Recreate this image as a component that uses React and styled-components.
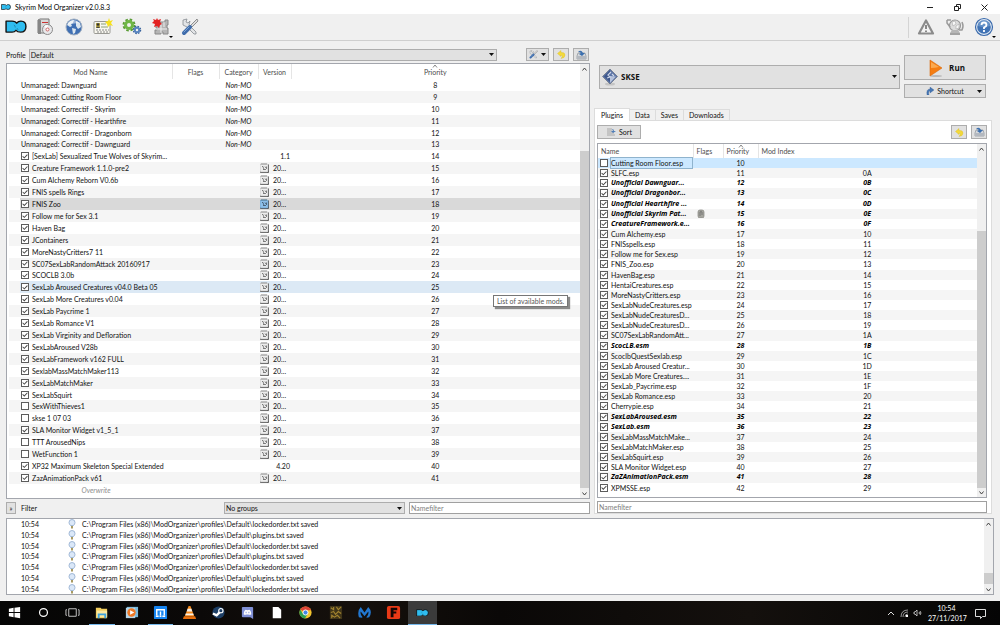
import { useState } from 'react'
import styled, { createGlobalStyle, css } from 'styled-components'

const GlobalStyle = createGlobalStyle`
    * {
        box-sizing: border-box;
    }

    body {
        margin: 0;
        background: #f0f0f0;
        color: #111;
        font-family: Lato, "Open Sans", sans-serif;
        font-size: 7px;
        line-height: 10px;
    }

    button, input, select {
        font: inherit;
        color: inherit;
        margin: 0;
        padding: 0;
        border-radius: 0;
    }

    svg {
        display: block;
        flex: none;
    }
`

const Window = styled.div`
    display: flex;
    flex-direction: column;
    height: 100vh;
`

const TitleBar = styled.header`
    display: flex;
    align-items: center;
    gap: 4px;
    height: 14px;
    padding: 0 4px 0 1px;
    background: #fff;
`

const Title = styled.h1`
    flex: 1;
    margin: 0;
    font-size: 7px;
    font-weight: normal;
    color: #000;
`

const WindowButton = styled.button`
    display: grid;
    place-items: center;
    width: 23px;
    height: 14px;
    border: 0;
    background: none;
`

const Toolbar = styled.nav`
    display: flex;
    align-items: center;
    height: 27px;
    padding: 0 2px 0 1px;
    border-bottom: 1px solid #cfcfcf;
`

const ToolButton = styled.button`
    position: relative;
    display: grid;
    place-items: center;
    width: 29px;
    height: 24px;
    border: 0;
    background: none;
`

const MenuMark = styled.span`
    position: absolute;
    right: 2px;
    bottom: 1px;
    border: 2px solid transparent;
    border-top-color: #000;
    border-bottom: 0;
`

const ToolbarEnd = styled.div`
    display: flex;
    align-items: center;
    height: 21px;
    margin-left: auto;
    padding-left: 2px;
    border-left: 1px solid #d4d4d4;
`

const Main = styled.main`
    flex: 1;
    display: grid;
    grid-template-columns: 584fr 401fr;
    gap: 3px;
    min-height: 0;
    padding: 0 6px;
`

const Column = styled.section`
    display: flex;
    flex-direction: column;
    min-width: 0;
    min-height: 0;
`

const ProfileRow = styled.div`
    display: flex;
    align-items: center;
    gap: 3px;
    height: 22px;
    padding: 7px 1px 2px 0;
`

const FieldLabel = styled.label`
    flex: none;
`

const SelectBox = styled.div`
    flex: 1;
    display: grid;
    align-items: center;

    > * {
        grid-area: 1 / 1;
    }

    > svg {
        justify-self: end;
        margin-right: 3px;
        pointer-events: none;
    }
`

const Select = styled.select`
    appearance: none;
    width: 100%;
    height: 12px;
    padding-left: 1px;
    border: 1px solid #adadad;
    background: #e1e1e1;

    ${({ $tall }) => $tall && css`
        height: 24px;
        padding-left: 21px;
        font-family: "Open Sans", sans-serif;
        font-size: 8px;
        font-weight: bold;
    `}
`

const SelectIcon = styled.span`
    justify-self: start;
    padding-left: 3px;
    pointer-events: none;
`

const Button = styled.button`
    display: flex;
    align-items: center;
    justify-content: center;
    gap: 3px;
    width: ${({ $width }) => $width || 'auto'};
    height: ${({ $height }) => $height || '13px'};
    border: 1px solid #adadad;
    background: #e1e1e1;
`

const ProfileTools = styled.div`
    display: flex;
    gap: 4px;
    margin-left: 26px;
`

const Panel = styled.div`
    flex: 1;
    display: flex;
    min-height: 0;
    border: 1px solid #a3a6ad;
    background: #fff;
`

const TableArea = styled.div`
    flex: 1;
    min-width: 0;
    padding: ${({ $padding }) => $padding};
`

const Table = styled.table`
    width: 100%;
    height: 100%;
    table-layout: fixed;
    border-collapse: collapse;
`

const Th = styled.th`
    position: relative;
    height: ${({ $height }) => $height};
    padding: 0 0 0 ${({ $left }) => ($left ? '3px' : '0')};
    border-right: 1px solid ${({ $last }) => ($last ? '#fff' : '#e5e5e5')};
    font-weight: normal;
    text-align: ${({ $left }) => ($left ? 'left' : 'center')};
    color: #4d4d4d;

    svg {
        position: absolute;
        top: 0;
        left: calc(50% - 3px);
    }
`

const rowColors = {
    selected: '#d9d9d9',
    hover: '#dce9f5',
    focus: '#cce8ff',
}

const Row = styled.tr`
    &:nth-child(even) {
        background: #f5f5f5;
    }

    td {
        padding: 0;
        line-height: 10px;
        white-space: nowrap;
    }

    ${({ $state }) => $state && css`
        td:not([data-indent]) {
            background: ${rowColors[$state]};
        }
    `}

    ${({ $master }) => $master && css`
        font-family: "Open Sans", sans-serif;
        font-weight: bold;
        font-style: italic;
        color: #000;
    `}
`

const Cell = styled.td`
    text-align: ${({ $align }) => $align || 'left'};
    font-style: ${({ $italic }) => ($italic ? 'italic' : 'inherit')};
    color: ${({ $muted }) => ($muted ? '#8c8c8c' : 'inherit')};
`

const NameLine = styled.label`
    display: flex;
    align-items: center;
    gap: 3px;
    height: 10px;
    padding-left: ${({ $pad }) => $pad || '1px'};
`

const NameText = styled.span`
    margin-right: 1px;
    outline: ${({ $focus }) => ($focus ? '1px solid #8fb3cd' : 'none')};
    flex: ${({ $focus }) => ($focus ? 1 : 'none')};
`

const Check = styled.input`
    appearance: none;
    display: grid;
    place-items: center;
    flex: none;
    width: 8px;
    height: 8px;
    border: 1px solid #5c5c5c;
    background: #fff;

    &:checked::after {
        content: "";
        width: 6px;
        height: 6px;
        background: #444;
        clip-path: polygon(4% 50%, 16% 42%, 38% 64%, 84% 16%, 96% 26%, 38% 86%);
    }
`

const VersionLine = styled.div`
    display: flex;
    align-items: center;
    justify-content: ${({ $plain }) => ($plain ? 'flex-end' : 'flex-start')};
    gap: 4px;
    height: 10px;
    padding: 0 1px 0 2px;
`

const ScrollTrack = styled.div`
    flex: none;
    display: flex;
    flex-direction: column;
    width: 9px;
    background: #f0f0f0;
`

const ScrollButton = styled.button`
    flex: none;
    display: grid;
    place-items: center;
    height: 9px;
    border: 0;
    background: none;
`

const ScrollPart = styled.div`
    flex: ${({ $size }) => $size} 0 0;
    background: ${({ $thumb }) => ($thumb ? '#cdcdcd' : 'none')};
`

const FilterRow = styled.div`
    display: flex;
    align-items: center;
    height: 15px;
    padding-top: 3px;
`

const FilterLabel = styled.span`
    flex: 1;
    padding-left: 5px;
`

const FilterFields = styled.div`
    display: grid;
    grid-template-columns: 1fr 1fr;
    gap: 4px;
    width: 366px;
`

const TextBox = styled.input`
    width: 100%;
    height: 12px;
    padding: 0 1px;
    border: 1px solid #a0a0a0;
    background: #fff;

    &::placeholder {
        color: #808080;
        opacity: 1;
    }
`

const Launcher = styled.div`
    display: flex;
    align-items: center;
    gap: 4px;
    padding: 14px 8px 10px 6px;
`

const LaunchButtons = styled.div`
    display: flex;
    flex-direction: column;
    gap: 4px;
    width: 82px;
`

const RunButton = styled(Button)`
    height: 25px;
    gap: 6px;
    padding-left: 4px;
    font-family: "Open Sans", sans-serif;
    font-size: 8px;
    font-weight: bold;
`

const ShortcutButton = styled(Button)`
    display: grid;
    grid-template-columns: 1fr auto auto 1fr;
    height: 14px;
    padding: 0 3px;

    svg:last-child {
        justify-self: end;
    }
`

const TabList = styled.div`
    display: flex;
    align-items: flex-end;
    height: 12px;
    padding-left: 1px;
`

const Tab = styled.button`
    height: ${({ $active }) => ($active ? '13px' : '11px')};
    margin-bottom: ${({ $active }) => ($active ? '-1px' : '0')};
    padding: 0 ${({ $active }) => ($active ? '6px' : '5px')};
    border: 1px solid #dcdcdc;
    border-left-width: ${({ $active }) => ($active ? '1px' : '0')};
    border-bottom: 0;
    background: ${({ $active }) => ($active ? '#fff' : '#f0f0f0')};
    line-height: 10px;
    z-index: 1;
`

const TabPane = styled.div`
    flex: 1;
    display: flex;
    flex-direction: column;
    min-height: 0;
    margin: 0 2px 0 1px;
    padding: 4px 4px 0 2px;
    border: 1px solid #dcdcdc;
    background: #fff;
`

const PaneTools = styled.div`
    display: flex;
    gap: 4px;
    padding-bottom: 4px;
`

const Spacer = styled.span`
    flex: 1;
`

const PaneFilter = styled.div`
    display: flex;
    padding: 3px 0 0;
`

const LogPanel = styled(Panel)`
    flex: none;
    height: 77px;
    margin: 4px 6px 6px;
`

const Tooltip = styled.div`
    position: absolute;
    left: 493px;
    top: 295px;
    padding: 0 3px;
    border: 1px solid #767676;
    background: #fff;
    box-shadow: 2px 2px 1px #8a8a8a;
    color: #575757;
    font-size: 7px;
    line-height: 10px;
`

const Taskbar = styled.footer`
    display: flex;
    align-items: stretch;
    height: 24px;
    background: linear-gradient(90deg, #050505, #0b0908 20%, #15100c 35%, #0a0807 50%, #14100d 75%, #050505);
    color: #fff;
`

const TaskItems = styled.div`
    display: grid;
    grid-template-columns: repeat(15, 1fr);
    width: 437px;
    margin-right: auto;
`

const TaskButton = styled.button`
    display: grid;
    place-items: center;
    margin: 0 ${({ $active }) => ($active ? '0' : '2px')};
    border: 0;
    border-bottom: 1px solid ${({ $open }) => ($open ? '#76b9ed' : 'transparent')};
    background: ${({ $active }) => ($active ? '#3b3b3b' : 'none')};
`

const Tray = styled.div`
    display: flex;
    align-items: center;
    gap: 5px;
    padding-right: 14px;
`

const Clock = styled.time`
    width: 37px;
    text-align: center;
    line-height: 10px;
`

const LogoIcon = ({ size = 22 }) => (
    <svg width={size} height={size * 0.6} viewBox="0 0 62 37">
        <path
            d="M3 3H20Q30 3 33 9Q37 3 45 3Q59 3 59 18Q59 34 44 34Q35 34 31 29Q27 34 20 34H3Z"
            fill="#2fbdf0" stroke="#111" strokeWidth="4" strokeLinejoin="round"
        />
        <path d="M25 14Q29 15 29 21M37 28L34 23" fill="none" stroke="#18759a" strokeWidth="2" />
    </svg>
)

const InstallIcon = () => (
    <svg width="18" height="18" viewBox="0 0 18 18">
        <path d="M2 2L4 1H13V15H2Z" fill="#d8d8d8" stroke="#777" />
        <path d="M2 2H5V16H2Z" fill="#858585" />
        <path d="M6 4H12V5H6Z" fill="#c33" />
        <circle cx="11.500" cy="11.500" r="5" fill="#e8e8ea" stroke="#8a8a8a" />
        <path d="M11 11L8 8A5 5 0 0 1 12 7Z" fill="#fff" />
        <circle cx="11.500" cy="11.500" r="1.500" fill="#fff" stroke="#c66" />
    </svg>
)

const GlobeIcon = () => (
    <svg width="18" height="18" viewBox="0 0 18 18">
        <circle cx="9" cy="9" r="8" fill="#3f6fb3" stroke="#a3b1c2" />
        <path d="M3 5Q5 2 9 2L8 5L6 6L7 8L5 9L2 7ZM7 10L11 11L10 15L8 16ZM11 3L15 5L16 9L13 11L11 8Z" fill="#dce6ee" />
        <path d="M3 5Q9 -1 15 5Q9 5 3 7Z" fill="#fff" opacity=".5" />
    </svg>
)

const CardIcon = () => (
    <svg width="20" height="18" viewBox="0 0 20 18">
        <rect x="1" y="3.500" width="16" height="12" rx="1" fill="#f7f6ee" stroke="#9a9a94" />
        <rect x="3" y="5" width="4" height="5" fill="#b5a445" />
        <circle cx="5" cy="6.500" r="1.300" fill="#333" />
        <path d="M3 10Q5 7 7 10Z" fill="#444" />
        <path d="M8 6H13M8 9H15" stroke="#8ba07a" />
        <path d="M3 12H16M4 14H15" stroke="#888" strokeDasharray="2 1" />
        <path d="M16 0L17 3L20 2L18 5L20 8L17 7L15 9L14 6L12 4L15 3Z" fill="#f7e11c" />
    </svg>
)

const GearsIcon = () => (
    <svg width="20" height="18" viewBox="0 0 20 18">
        <circle cx="7" cy="7" r="5.500" fill="none" stroke="#5a9c35" strokeWidth="2" strokeDasharray="2.500 1.820" />
        <circle cx="7" cy="7" r="3.500" fill="none" stroke="#6fb646" strokeWidth="3" />
        <circle cx="15" cy="12" r="3.500" fill="none" stroke="#35609a" strokeWidth="1.500" strokeDasharray="1.600 1.150" />
        <circle cx="15" cy="12" r="2.200" fill="none" stroke="#5683bf" strokeWidth="2" />
    </svg>
)

const PuzzleIcon = () => (
    <svg width="18" height="18" viewBox="0 0 18 18">
        <path d="M4 7H8V4H13V2H16V7H15V10H16V16H11V14H9V16H3V12H5V10H4Z" fill="#b5b5b5" stroke="#888" />
        <path d="M9 5V15M4 11H15M12 4V9" stroke="#eee" />
        <path d="M5 0L6 2L9 1L8 4L10 6L8 7L7 10L5 8L2 9L3 6L0 5L2 3L1 1L4 2Z" fill="#e32222" />
    </svg>
)

const ToolsIcon = ({ size = 18 }) => (
    <svg width={size} height={size} viewBox="0 0 18 18">
        <path d="M2 2L6 1L5 4L7 5L9 3L8 7L15 14Q16 17 13 16L6 9L2 7Z" fill="#e2e4e6" stroke="#858a90" strokeWidth=".8" />
        <path d="M16 1L17 3L11 9L9 8Z" fill="#ddd" stroke="#777" strokeWidth=".8" />
        <path d="M9 9L3 15" stroke="#3f6cab" strokeWidth="4" strokeLinecap="round" />
        <path d="M8 9L3 14" stroke="#7ba4d6" strokeWidth="1" strokeLinecap="round" />
    </svg>
)

const WarningIcon = () => (
    <svg width="18" height="18" viewBox="0 0 18 18">
        <path d="M9 2.500L16 15.500H2Z" fill="#f3f3f3" stroke="#8b8b8b" strokeWidth="2.200" strokeLinejoin="round" />
        <path d="M9 7V11M9 12.500V14" stroke="#666" strokeWidth="1.500" />
    </svg>
)

const EndorseIcon = () => (
    <svg width="20" height="18" viewBox="0 0 20 18">
        <circle cx="10" cy="7.500" r="5.500" fill="#dcdcdc" stroke="#999" strokeWidth="1.200" />
        <path d="M7 4L10 3L11 6L8 8ZM11 8L14 6V10L11 11Z" fill="#f8f8f8" stroke="#aaa" strokeWidth=".6" />
        <path d="M2 2H6M2 2V5L5 9M17 4Q19 8 17 12H14" fill="none" stroke="#9a9a9a" strokeWidth="1.500" />
        <path d="M5 15H15L13 12H7Z" fill="#b5b5b5" />
        <path d="M5 16H15" stroke="#888" strokeWidth="1.500" />
    </svg>
)

const HelpIcon = () => (
    <svg width="20" height="20" viewBox="0 0 20 20">
        <circle cx="10" cy="10" r="8.500" fill="#dfe8f2" stroke="#3a6aac" strokeWidth="1.200" />
        <circle cx="10" cy="10" r="6.800" fill="#4073b5" />
        <path d="M4 9A6 6 0 0 1 16 9Q10 11 4 9Z" fill="#7ea6d6" opacity=".6" />
        <path d="M7.500 8Q7.500 5.500 10 5.500T12.500 8Q12.500 9.500 10 10.500V12M10 13V15" fill="none" stroke="#fff" strokeWidth="1.800" />
    </svg>
)

const UndoIcon = () => (
    <svg width="9" height="9" viewBox="0 0 9 9">
        <path d="M.5 3.500L4 .5V2.500Q8 2 8 5Q8 8 4 8.500Q6.500 6 4 5V6.500Z" fill="#f3d93a" stroke="#d8bd25" strokeWidth=".4" />
    </svg>
)

const BackupIcon = () => (
    <svg width="11" height="10" viewBox="0 0 11 10">
        <path d="M1 6L2 3H9L10 6V9H1Z" fill="#d5d8dc" stroke="#8b9097" strokeWidth=".7" />
        <path d="M1 6H10V9H1Z" fill="#b3b8bf" />
        <path d="M2 2Q5 -1 7 3H9L6 6L3 4L5 3Q4 2 2 2Z" fill="#3b6fae" />
    </svg>
)

const SortIcon = () => (
    <svg width="10" height="8" viewBox="0 0 10 8">
        <path d="M1 1H6M1 3H6M1 5H8M1 7H9" stroke="#a8a8a8" />
        <path d="M6 1Q8 1 8 3H10L7 5L5 3H7Z" fill="#4e7db8" />
    </svg>
)

const SkseIcon = () => (
    <svg width="16" height="18" viewBox="0 0 16 18">
        <ellipse cx="8" cy="16" rx="5" ry="1.500" fill="#c4c4c4" />
        <path d="M8 1L15.500 8.500L8 16L.5 8.500Z" fill="#5b74a6" stroke="#6d7688" strokeWidth=".8" />
        <path d="M8 8L14 8.500L8 15Z" fill="#b5c2dc" />
        <path d="M8 2L2 8.500L8 14Z" fill="#3f588c" />
        <path d="M9 4L6 7L8 9L5 10M10 6L12 8" fill="none" stroke="#cdd6e8" strokeWidth="1.200" />
    </svg>
)

const PlayIcon = () => (
    <svg width="14" height="18" viewBox="0 0 14 18">
        <ellipse cx="7" cy="17" rx="6" ry="1" fill="#b9b9b9" />
        <path d="M1 1L13 9L1 17Z" fill="#f57d11" stroke="#d9680a" strokeWidth=".6" />
        <path d="M2 3L10 8Q6 9 2 9Z" fill="#fba94f" />
    </svg>
)

const ShortcutIcon = () => (
    <svg width="8" height="8" viewBox="0 0 8 8">
        <path d="M1 8Q0 2 4 2V0L8 3L4 6V4Q2 4 3 8Z" fill="#4676b4" stroke="#2e5688" strokeWidth=".3" />
    </svg>
)

const ArrowDown = () => (
    <svg width="5" height="3" viewBox="0 0 5 3">
        <path d="M0 0H5L2.500 3Z" fill="#111" />
    </svg>
)

const Chevron = ({ down, color = '#444', width = 5 }) => (
    <svg width={width} height="4" viewBox="0 0 5 4">
        <path d={down ? 'M.5 .5L2.500 3L4.500 .5' : 'M.5 3.500L2.500 1L4.500 3.500'} fill="none" stroke={color} />
    </svg>
)

const NexusIcon = ({ active }) => (
    <svg width="9" height="10" viewBox="0 0 9 10">
        <path d="M.5 1.500V9.500H8.500V1.500" fill="none" stroke="#555" />
        <rect x="0" y="1" width="8" height="8" rx="1" fill={active ? '#8dbfe9' : '#ededed'} stroke={active ? '#6a9cc8' : '#bbb'} strokeWidth=".6" />
        <path d="M2 0V2M4 0V2M6 0V2" stroke={active ? '#356' : '#777'} strokeWidth=".7" />
        <path d="M2 3.500H3L4 6.500M5 3.500L6 5M6.500 3.500V6M3 6.500H6" fill="none" stroke={active ? '#345' : '#555'} strokeWidth=".7" />
    </svg>
)

const ClipIcon = () => (
    <svg width="8" height="9" viewBox="0 0 8 9">
        <rect x="1" y="1" width="6" height="8" rx="2" fill="#a5a59e" stroke="#858580" strokeWidth=".7" />
        <path d="M3 7V3Q4 2 5 3V6" fill="none" stroke="#666" strokeWidth=".7" />
    </svg>
)

const BulbIcon = () => (
    <svg width="8" height="10" viewBox="0 0 8 10">
        <path d="M4 .5Q7 .5 7 3.500Q7 5 5.500 6.500H2.500Q1 5 1 3.500Q1 .5 4 .5Z" fill="#dbe8f8" stroke="#8ea9cd" strokeWidth=".8" />
        <path d="M3 7H5V9.500H3Z" fill="#a89a62" />
    </svg>
)

const mods = [
    ...['Dawnguard', 'Cutting Room Floor', 'Correctif - Skyrim', 'Correctif - Hearthfire', 'Correctif - Dragonborn', 'Correctif - Dawnguard']
        .map((name) => ({ name: `Unmanaged: ${name}`, unmanaged: true })),
    { name: '[SexLab] Sexualized True Wolves of Skyrim...', version: '1.1' },
    { name: 'Creature Framework 1.1.0-pre2' },
    { name: 'Cum Alchemy Reborn V0.6b' },
    { name: 'FNIS spells Rings' },
    { name: 'FNIS Zoo', state: 'selected' },
    { name: 'Follow me for Sex 3.1' },
    { name: 'Haven Bag' },
    { name: 'JContainers' },
    { name: 'MoreNastyCritters7 11' },
    { name: 'SC07SexLabRandomAttack 20160917' },
    { name: 'SCOCLB 3.0b' },
    { name: 'SexLab Aroused Creatures v04.0 Beta 05', state: 'hover' },
    { name: 'SexLab More Creatures v0.04' },
    { name: 'SexLab Paycrime 1' },
    { name: 'SexLab Romance V1' },
    { name: 'SexLab Virginity and Defloration' },
    { name: 'SexLabAroused V28b' },
    { name: 'SexLabFramework v162 FULL' },
    { name: 'SexlabMassMatchMaker113' },
    { name: 'SexLabMatchMaker' },
    { name: 'SexLabSquirt' },
    { name: 'SexWithThieves1', off: true },
    { name: 'skse 1 07 03', off: true },
    { name: 'SLA Monitor Widget v1_5_1' },
    { name: 'TTT ArousedNips', off: true },
    { name: 'WetFunction 1', off: true },
    { name: 'XP32 Maximum Skeleton Special Extended', version: '4.20' },
    { name: 'ZazAnimationPack v61' },
]

const plugins = [
    'Cutting Room Floor.esp', 'SLFC.esp', '*Unofficial Dawnguar...', '*Unofficial Dragonbor...',
    '*Unofficial Hearthfire ...', '*Unofficial Skyrim Pat...', '*CreatureFramework.e...', 'Cum Alchemy.esp',
    'FNISspells.esp', 'Follow me for Sex.esp', 'FNIS_Zoo.esp', 'HavenBag.esp', 'HentaiCreatures.esp',
    'MoreNastyCritters.esp', 'SexLabNudeCreatures.esp', 'SexLabNudeCreaturesD...', 'SexLabNudeCreaturesD...',
    'SC07SexLabRandomAtt...', '*ScocLB.esm', 'ScoclbQuestSexlab.esp', 'SexLab Aroused Creatur...',
    'SexLab More Creatures....', 'SexLab_Paycrime.esp', 'SexLab Romance.esp', 'Cherrypie.esp',
    '*SexLabAroused.esm', '*SexLab.esm', 'SexLabMassMatchMake...', 'SexLabMatchMaker.esp',
    'SexLabSquirt.esp', 'SLA Monitor Widget.esp', '*ZaZAnimationPack.esm', 'XPMSSE.esp',
].map((text, i) => ({
    name: text.replace('*', ''),
    master: text.startsWith('*'),
    priority: i + 10,
    // load order index is hexadecimal, the first plugin shown is disabled and has none
    index: i === 0 ? '' : (i + 9).toString(16).toUpperCase().padStart(2, '0'),
}))

const logFiles = ['lockedorder', 'plugins', 'lockedorder', 'plugins', 'lockedorder', 'plugins', 'lockedorder']

const ScrollBar = ({ before, thumb, after }) => (
    <ScrollTrack>
        <ScrollButton aria-label="Scroll up"><Chevron /></ScrollButton>
        <ScrollPart $size={before} />
        <ScrollPart $size={thumb} $thumb />
        <ScrollPart $size={after} />
        <ScrollButton aria-label="Scroll down"><Chevron down /></ScrollButton>
    </ScrollTrack>
)

const ModList = () => (
    <Panel>
        <TableArea $padding="0 0 2px 2px">
            <Table>
                <colgroup>
                    <col width="11" />
                    <col width="152" />
                    <col width="47" />
                    <col width="39" />
                    <col width="33" />
                    <col />
                </colgroup>
                <thead>
                    <tr>
                        <Th colSpan={2} $height="15px">Mod Name</Th>
                        <Th $height="15px">Flags</Th>
                        <Th $height="15px">Category</Th>
                        <Th $height="15px">Version</Th>
                        <Th $height="15px" $last><Chevron color="#888" width={6} />Priority</Th>
                    </tr>
                </thead>
                <tbody>
                    {mods.map((mod, i) => (
                        <Row key={mod.name} $state={mod.state}>
                            <td data-indent />
                            <Cell>
                                <NameLine>
                                    {!mod.unmanaged && <Check type="checkbox" defaultChecked={!mod.off} />}
                                    <NameText>{mod.name}</NameText>
                                </NameLine>
                            </Cell>
                            <Cell />
                            <Cell $align="center" $italic>{mod.unmanaged && 'Non-MO'}</Cell>
                            <Cell>
                                {!mod.unmanaged && (
                                    <VersionLine $plain={mod.version}>
                                        {!mod.version && <NexusIcon active={mod.state === 'selected'} />}
                                        {mod.version || '20...'}
                                    </VersionLine>
                                )}
                            </Cell>
                            <Cell $align="center">{i + 8}</Cell>
                        </Row>
                    ))}
                    <Row>
                        <td data-indent />
                        <Cell $align="center" $italic $muted>Overwrite</Cell>
                        <Cell colSpan={4} />
                    </Row>
                </tbody>
            </Table>
        </TableArea>
        <ScrollBar before={78} thumb={337} after={1} />
    </Panel>
)

const PluginList = () => (
    <Panel>
        <TableArea $padding="0 0 4px 0">
            <Table>
                <colgroup>
                    <col width="95" />
                    <col width="30" />
                    <col width="35" />
                    <col />
                </colgroup>
                <thead>
                    <tr>
                        <Th $height="14px" $left>Name</Th>
                        <Th $height="14px" $left>Flags</Th>
                        <Th $height="14px" $left><Chevron color="#888" width={6} />Priority</Th>
                        <Th $height="14px" $left $last>Mod Index</Th>
                    </tr>
                </thead>
                <tbody>
                    {plugins.map((plugin, i) => (
                        <Row key={plugin.priority} $master={plugin.master} $state={i === 0 ? 'focus' : undefined}>
                            <Cell>
                                <NameLine $pad="2px">
                                    <Check type="checkbox" defaultChecked={i > 0} />
                                    <NameText $focus={i === 0}>{plugin.name}</NameText>
                                </NameLine>
                            </Cell>
                            <Cell>{plugin.priority === 15 && <NameLine $pad="4px" as="div"><ClipIcon /></NameLine>}</Cell>
                            <Cell $align="center">{plugin.priority}</Cell>
                            <Cell $align="center">{plugin.index}</Cell>
                        </Row>
                    ))}
                </tbody>
            </Table>
        </TableArea>
        <ScrollBar before={78} thumb={257} after={0} />
    </Panel>
)

const LogTable = styled(Table)`
    td {
        padding: 0;
        line-height: 10px;
    }
`

const Log = () => (
    <LogPanel>
        <TableArea $padding="0 0 0 14px">
            <LogTable>
                <colgroup>
                    <col width="47" />
                    <col width="14" />
                    <col />
                </colgroup>
                <tbody>
                    {logFiles.map((file, i) => (
                        <tr key={i}>
                            <td>10:54</td>
                            <td><BulbIcon /></td>
                            <td>{`C:\\Program Files (x86)\\ModOrganizer\\profiles\\Default\\${file}.txt saved`}</td>
                        </tr>
                    ))}
                </tbody>
            </LogTable>
        </TableArea>
        <ScrollBar before={45} thumb={11} after={1} />
    </LogPanel>
)

const tasks = [
    { name: 'Start', icon: <path d="M2 4L7 3V7.500H2ZM8 3L14 2V7.500H8ZM2 8.500H7V13L2 12ZM8 8.500H14V14L8 13Z" fill="#fff" /> },
    { name: 'Cortana', icon: <circle cx="8" cy="8" r="4.200" fill="none" stroke="#fff" strokeWidth="1.300" /> },
    { name: 'Task View', icon: <path d="M4 4H12V12H4ZM2 5H1V11H2M14 5H15V11H14" fill="none" stroke="#ccc" /> },
    {
        name: 'File Explorer', open: true, icon: <>
            <path d="M2 3H7L8 4H14V14H2Z" fill="#f3ce5e" />
            <path d="M3 6H14V13H3Z" fill="#fbe9a0" />
            <path d="M4 9H13V14H11V11H6V14H4Z" fill="#3fa3dd" />
        </>,
    },
    {
        name: 'Media Player', icon: <>
            <rect x="3" y="2" width="12" height="11" fill="#79b9dd" />
            <rect x="2" y="3" width="10" height="11" fill="#b7d6e8" />
            <circle cx="8" cy="8" r="4.500" fill="#ee7826" />
            <path d="M6.500 5.500L11 8L6.500 10.500Z" fill="#fff" />
        </>,
    },
    {
        name: 'Maxthon', open: true, icon: <>
            <rect x="1" y="1" width="14" height="14" rx="1" fill="#1684f0" />
            <path d="M4 11V5H12V11M8 7V11M3 12H6M7 12H9M10 12H13" fill="none" stroke="#fff" strokeWidth="1.500" />
        </>,
    },
    {
        name: 'VLC', icon: <>
            <path d="M7 1H9L13 12H3Z" fill="#f58a1c" />
            <path d="M6 4H10L11 7H5ZM4 9H12L12.500 11H3.500Z" fill="#f3f0ea" />
            <path d="M2 12H14L15 15H1Z" fill="#e86f0c" />
        </>,
    },
    {
        name: 'Steam', icon: <>
            <circle cx="8" cy="8" r="6.500" fill="#1d3f66" />
            <path d="M2 9L6 11L10 7" fill="none" stroke="#fff" strokeWidth="2.500" />
            <circle cx="10.500" cy="6" r="2.300" fill="#1d3f66" stroke="#fff" strokeWidth="1.200" />
        </>,
    },
    {
        name: 'Discord', icon: <>
            <path d="M3 2H13Q14 2 14 3V15L11 13H3Q2 13 2 12V3Q2 2 3 2Z" fill="#8090d6" />
            <path d="M4 10Q4 6 6 5Q8 6 10 5Q12 6 12 10Q10 11 9 10H7Q5 11 4 10Z" fill="#fff" />
            <path d="M6 8H7M9 8H10" stroke="#8090d6" strokeWidth="1.500" />
        </>,
    },
    { name: 'Document', icon: <path d="M4 2H10L13 5V14H4Z" fill="#fff" /> },
    {
        name: 'Chrome', icon: <>
            <circle cx="8" cy="8" r="6.500" fill="#f3c52e" />
            <path d="M8 8L2.400 4.700A6.500 6.500 0 0 1 14 5.500H8Z" fill="#dc4437" />
            <path d="M2.400 4.700A6.500 6.500 0 0 0 7.500 14.500L10.500 9L8 8L5 9Z" fill="#2c9e55" />
            <circle cx="8" cy="8" r="2.700" fill="#4285e8" stroke="#fff" />
        </>,
    },
    {
        name: 'Game', icon: <>
            <rect x="2" y="1" width="13" height="14" fill="#3f3418" />
            <path d="M3 3L6 5V2M9 2L11 5L14 2M3 8L6 7L8 10L11 7L14 9M4 14V11L7 13L10 11L13 14" fill="none" stroke="#a3842f" strokeWidth="1.200" />
        </>,
    },
    { name: 'Malwarebytes', icon: <path d="M2 13Q0 6 4 2L8 8L12 2Q17 7 13 13Q10 14 10 13Q13 10 12 7L8 12L4 7Q3 10 6 13Q5 14 2 13Z" fill="#2277cf" /> },
    {
        name: 'FormatFactory', icon: <>
            <rect x="1" y="1" width="14" height="14" rx="2" fill="#ea3a17" />
            <path d="M5 3H12V5.500H8V7H11V9H8V13H5Z" fill="#150604" />
        </>,
    },
]

const FilterField = ({ label }) => <TextBox type="text" placeholder="Namefilter" aria-label={label} />

const App = () => {
    const [tab, setTab] = useState('Plugins')

    return (
        <Window>
            <GlobalStyle />
            <TitleBar>
                <LogoIcon size={10} />
                <Title>Skyrim Mod Organizer v2.0.8.3</Title>
                <WindowButton aria-label="Minimize">
                    <svg width="7" height="7"><path d="M0 3.500H6" stroke="#222" /></svg>
                </WindowButton>
                <WindowButton aria-label="Restore">
                    <svg width="7" height="7"><path d="M.5 2.500H4.500V6.500H.5ZM2.500 2V.5H6.500V4.500H5" fill="none" stroke="#222" /></svg>
                </WindowButton>
                <WindowButton aria-label="Close">
                    <svg width="7" height="7"><path d="M.5 .5L6.500 6.500M6.500 .5L.5 6.500" stroke="#222" /></svg>
                </WindowButton>
            </TitleBar>

            <Toolbar>
                <ToolButton aria-label="Mod Organizer"><LogoIcon /></ToolButton>
                <ToolButton aria-label="Install mod"><InstallIcon /></ToolButton>
                <ToolButton aria-label="Nexus"><GlobeIcon /></ToolButton>
                <ToolButton aria-label="Profiles"><CardIcon /></ToolButton>
                <ToolButton aria-label="Executables"><GearsIcon /></ToolButton>
                <ToolButton aria-label="Tools"><PuzzleIcon /><MenuMark /></ToolButton>
                <ToolButton aria-label="Settings"><ToolsIcon /></ToolButton>
                <ToolbarEnd>
                    <ToolButton aria-label="Notifications"><WarningIcon /></ToolButton>
                    <ToolButton aria-label="Endorse"><EndorseIcon /></ToolButton>
                    <ToolButton aria-label="Help"><HelpIcon /><MenuMark /></ToolButton>
                </ToolbarEnd>
            </Toolbar>

            <Main>
                <Column>
                    <ProfileRow>
                        <FieldLabel htmlFor="profile">Profile</FieldLabel>
                        <SelectBox>
                            <Select id="profile"><option>Default</option></Select>
                            <ArrowDown />
                        </SelectBox>
                        <ProfileTools>
                            <Button $width="23px" aria-label="Options"><ToolsIcon size={9} /><ArrowDown /></Button>
                            <Button $width="16px" aria-label="Restore backup"><UndoIcon /></Button>
                            <Button $width="16px" aria-label="Create backup"><BackupIcon /></Button>
                        </ProfileTools>
                    </ProfileRow>
                    <ModList />
                    <FilterRow>
                        <Button $width="10px" $height="12px" aria-label="Show filters">»</Button>
                        <FilterLabel>Filter</FilterLabel>
                        <FilterFields>
                            <SelectBox>
                                <Select aria-label="Groups"><option>No groups</option></Select>
                                <ArrowDown />
                            </SelectBox>
                            <FilterField label="Filter mods by name" />
                        </FilterFields>
                    </FilterRow>
                </Column>

                <Column>
                    <Launcher>
                        <SelectBox>
                            <Select $tall aria-label="Executable"><option>SKSE</option></Select>
                            <SelectIcon><SkseIcon /></SelectIcon>
                            <ArrowDown />
                        </SelectBox>
                        <LaunchButtons>
                            <RunButton><PlayIcon />Run</RunButton>
                            <ShortcutButton><span /><ShortcutIcon />Shortcut<ArrowDown /></ShortcutButton>
                        </LaunchButtons>
                    </Launcher>
                    <TabList role="tablist">
                        {['Plugins', 'Data', 'Saves', 'Downloads'].map((name) => (
                            <Tab key={name} role="tab" aria-selected={tab === name} $active={tab === name} onClick={() => setTab(name)}>
                                {name}
                            </Tab>
                        ))}
                    </TabList>
                    <TabPane>
                        <PaneTools>
                            <Button $width="44px" $height="14px"><SortIcon />Sort</Button>
                            <Spacer />
                            <Button $width="16px" $height="14px" aria-label="Restore load order"><UndoIcon /></Button>
                            <Button $width="16px" $height="14px" aria-label="Save load order"><BackupIcon /></Button>
                        </PaneTools>
                        <PluginList />
                        <PaneFilter><FilterField label="Filter plugins by name" /></PaneFilter>
                    </TabPane>
                </Column>
            </Main>

            <Log />

            <Taskbar>
                <TaskItems>
                    {tasks.map((task) => (
                        <TaskButton key={task.name} aria-label={task.name} $open={task.open}>
                            <svg width="15" height="15" viewBox="0 0 16 16">{task.icon}</svg>
                        </TaskButton>
                    ))}
                    <TaskButton aria-label="Mod Organizer" $open $active><LogoIcon size={13} /></TaskButton>
                </TaskItems>
                <Tray>
                    <svg width="8" height="6" viewBox="0 0 8 6"><path d="M1 5L4 2L7 5" fill="none" stroke="#ddd" /></svg>
                    <svg width="8" height="8" viewBox="0 0 8 8">
                        <path d="M1 8Q1 1 8 1M3 8Q3 3 8 3M5 8Q5 5 8 5" fill="none" stroke="#bbb" strokeWidth=".8" />
                        <path d="M6 8V6H8V8Z" fill="#fff" />
                    </svg>
                    <svg width="10" height="8" viewBox="0 0 10 8">
                        <path d="M1 3H2L4 1V7L2 5H1ZM6 3Q7 4 6 5M7 2Q9 4 7 6" fill="none" stroke="#ddd" strokeWidth=".8" />
                    </svg>
                    <Clock>10:54<br />27/11/2017</Clock>
                    <Spacer />
                    <svg width="11" height="11" viewBox="0 0 11 11"><path d="M.5 1.500H10.500V8.500H7.500L5.500 10.500V8.500H.5Z" fill="none" stroke="#ddd" /></svg>
                </Tray>
            </Taskbar>

            <Tooltip role="tooltip">List of available mods.</Tooltip>
        </Window>
    )
}

export default App
